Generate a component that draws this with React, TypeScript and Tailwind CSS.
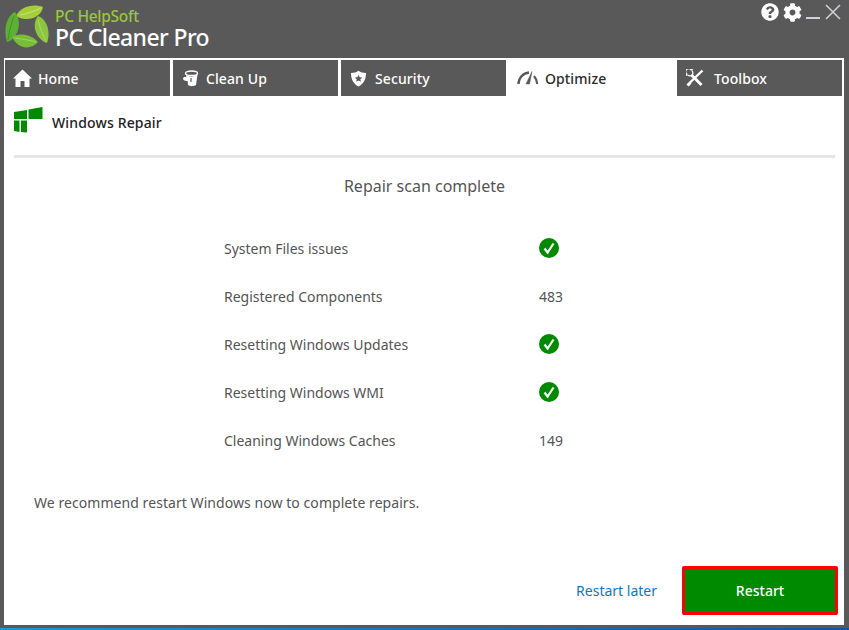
import React from 'react';
import { FaCog, FaQuestionCircle } from 'react-icons/fa';

const Logo = () => (
  <svg width="46" height="46" viewBox="0 0 46 46">
    <path d="M11 12 C15 3 28 -1 38 3 C37 11 25 20 11 12 Z" fill="#a4cf38" />
    <path d="M10 8 C2 12 -2 24 2 38 C11 36 19 20 10 8 Z" fill="#5cb034" />
    <path d="M33 12 C42 15 46 28 42 39 C33 37 25 22 33 12 Z" fill="#8cc63f" />
    <path d="M7 33 C13 29 25 29 33 38 C27 45 14 47 7 33 Z" fill="#79bc38" />
    <path d="M15 11 C22 10 29 7 36 4" stroke="#d2e88a" strokeWidth="0.8" fill="none" />
    <path d="M9 12 C6 20 4 28 3 36" stroke="#3f8a24" strokeWidth="0.8" fill="none" />
    <path d="M33 16 C35 24 38 31 41 37" stroke="#b9dc6b" strokeWidth="0.8" fill="none" />
    <path d="M10 34 C17 35 24 36 31 38" stroke="#b0d96a" strokeWidth="0.8" fill="none" />
  </svg>
);

const HomeIcon = () => (
  <svg width="19" height="18" viewBox="0 0 19 18" fill="white">
    <path d="M9.5 0.5 L19 9.5 L16.5 9.5 L16.5 18 L11.5 18 L11.5 12 L7.5 12 L7.5 18 L2.5 18 L2.5 9.5 L0 9.5 Z" />
  </svg>
);

const CleanIcon = () => (
  <svg width="17" height="17" viewBox="0 0 17 17" fill="white">
    <ellipse cx="9.5" cy="3.2" rx="6" ry="2.2" fill="none" stroke="white" strokeWidth="1.4" />
    <path d="M4 5 C7 7 12 7 15.5 4.5 L14 15 C12 16.5 8 16.5 6 15 L5.6 11 C3 11.5 1 10 1 8.5 C1 7 3 6.5 4.4 7.2 Z" />
    <path d="M9 8 L9 12" stroke="#595959" strokeWidth="1.2" />
  </svg>
);

const ShieldIcon = () => (
  <svg width="17" height="17" viewBox="0 0 17 17">
    <path d="M8.5 0.8 C10.5 2.3 13 3 16 3 C16 9.5 13.5 14 8.5 16.4 C3.5 14 1 9.5 1 3 C4 3 6.5 2.3 8.5 0.8 Z" fill="white" />
    <path d="M8.5 4.8 L9.6 7.2 L12.2 7.5 L10.3 9.2 L10.8 11.8 L8.5 10.5 L6.2 11.8 L6.7 9.2 L4.8 7.5 L7.4 7.2 Z" fill="#595959" />
  </svg>
);

const GaugeIcon = () => (
  <svg width="22" height="14" viewBox="0 0 22 14" fill="none" stroke="#595959">
    <path d="M1.5 13 C1.5 7 6 2 12 1.5" strokeWidth="2.4" />
    <path d="M15 0.5 L9 13 L12.5 13 Z" fill="#595959" strokeWidth="0.5" />
    <path d="M17 5 C18.8 7 20 10 20.2 13" strokeWidth="2.2" />
  </svg>
);

const ToolIcon = () => (
  <svg width="18" height="18" viewBox="0 0 18 18" fill="none" stroke="white">
    <path d="M16.5 1.5 L4 13.5" strokeWidth="2.4" />
    <path d="M1.5 16.5 L4.5 13.5" strokeWidth="3" />
    <path d="M5.5 6 L15.5 16" strokeWidth="2.8" />
    <path d="M6 1.2 A3.6 3.6 0 1 0 1.2 6" strokeWidth="2.2" />
    <path d="M6 1.5 C7 3 7 5 6 6 C5 7 3 7 1.5 6" strokeWidth="1.2" />
  </svg>
);

const WindowsIcon = () => (
  <svg width="29" height="27" viewBox="0 0 29 27" fill="#008a00">
    <path d="M0 6 L13 4 L13 13 L0 13 Z" />
    <path d="M14.5 3.6 L28.5 1 L28.5 13 L14.5 13 Z" />
    <path d="M0 14.5 L5.5 14.5 L5.5 26 L0 25 Z" />
    <path d="M7 14.5 L13 14.5 L13 26.6 L7 26 Z" />
  </svg>
);

const Check = () => (
  <svg width="20" height="20" viewBox="0 0 20 20">
    <circle cx="10" cy="10" r="10" fill="#008a00" />
    <path d="M5.5 10.5 L8.6 14.5 L14.5 5.5" fill="none" stroke="white" strokeWidth="2.2" />
  </svg>
);

const tabs = [
  { label: 'Home', icon: <HomeIcon />, slot: 'w-[33px]' },
  { label: 'Clean Up', icon: <CleanIcon />, slot: 'w-[33px]' },
  { label: 'Security', icon: <ShieldIcon />, slot: 'w-[34px]' },
];

const rows = [
  { label: 'System Files issues', check: true },
  { label: 'Registered Components', value: '483' },
  { label: 'Resetting Windows Updates', check: true },
  { label: 'Resetting Windows WMI', check: true },
  { label: 'Cleaning Windows Caches', value: '149' },
];

export default function App() {
  return (
    <div className='font-["Noto_Sans","Open_Sans",sans-serif] w-[849px] h-[630px] bg-[#595959] flex flex-col overflow-hidden'>
      <div className="h-[58px] flex justify-between shrink-0">
        <div className="flex pl-[5px] pt-[4px] gap-[4px]">
          <Logo />
          <div className="flex flex-col pt-[5px]">
            <span className="text-[15.5px] leading-[15px] text-[#9ac63c] font-medium tracking-[-0.3px]">PC HelpSoft</span>
            <span className="text-[23px] leading-[27px] text-white font-medium tracking-[-0.6px]">PC Cleaner Pro</span>
          </div>
        </div>
        <div className="flex items-start pt-[3px] pr-[8px]">
          <FaQuestionCircle size={18} color="white" />
          <FaCog size={19} color="white" className="ml-[4px]" />
          <span className="w-[14px] h-[2px] bg-[#cfd3d8] mt-[14px] ml-[4px]" />
          <svg width="16" height="16" viewBox="0 0 16 16" className="ml-[5px] mt-[1px]" stroke="#cfd3d8" strokeWidth="1.5">
            <path d="M1 1 L15 15 M15 1 L1 15" />
          </svg>
        </div>
      </div>
      <div className="ml-[4px] w-[840px] h-[567px] bg-white flex flex-col shrink-0">
        <div className="flex pt-[2px] pl-[1px] h-[38px] shrink-0">
          {tabs.map((t) => (
            <div key={t.label} className="w-[165px] mr-[3px] bg-[#595959] flex items-center text-white text-[14px] font-medium tracking-[0.1px]">
              <span className={`${t.slot} flex justify-center pl-[1px]`}>{t.icon}</span>
              <span>{t.label}</span>
            </div>
          ))}
          <div className="w-[171px] -ml-[3px] flex items-center text-[#2b2b2b] text-[14px] font-medium tracking-[0.1px]">
            <span className="w-[39px] flex justify-end pr-[6px]"><GaugeIcon /></span>
            <span>Optimize</span>
          </div>
          <div className="w-[165px] bg-[#595959] flex items-center text-white text-[14px] font-medium tracking-[0.1px]">
            <span className="w-[37px] flex justify-center pr-[2px]"><ToolIcon /></span>
            <span>Toolbox</span>
          </div>
        </div>

        <div className="flex flex-col flex-1 pl-[10px] pr-[9px]">
          <div className="h-[62px] flex items-start border-b-[3px] border-[#e5e5e5] shrink-0">
            <span className="mt-[10px]"><WindowsIcon /></span>
            <span className="ml-[9px] mt-[16px] text-[14px] leading-[22px] font-medium text-[#222222] tracking-[0.15px]">Windows Repair</span>
          </div>
          <div className="text-center text-[16px] leading-[22px] text-[#555555] mt-[17px]">Repair scan complete</div>
          <div className="flex flex-col mt-[27px] pl-[210px]">
            {rows.map((r) => (
              <div key={r.label} className="h-[48px] flex items-center text-[14px] text-[#555555]">
                <span className="w-[315px]">{r.label}</span>
                {r.check ? <Check /> : <span>{r.value}</span>}
              </div>
            ))}
          </div>
          <p className="mt-[28px] pl-[20px] text-[14px] leading-[22px] text-[#555555] tracking-[0.06px]">We recommend restart Windows now to complete repairs.</p>
          <div className="flex items-center justify-end mt-[52px]">
            <a className="text-[14px] text-[#0a78c8] mr-[25px]">Restart later</a>
            <button className="w-[156px] h-[49px] -mr-[3px] bg-[#008a00] border-[3px] border-[#ff0000] rounded-[2px] text-white text-[14px] font-medium">Restart</button>
          </div>
        </div>
      </div>
      <div className="mt-auto h-[2px] bg-gradient-to-r from-[#1a9ad0] to-[#1d4f9e]" />
    </div>
  );
}
